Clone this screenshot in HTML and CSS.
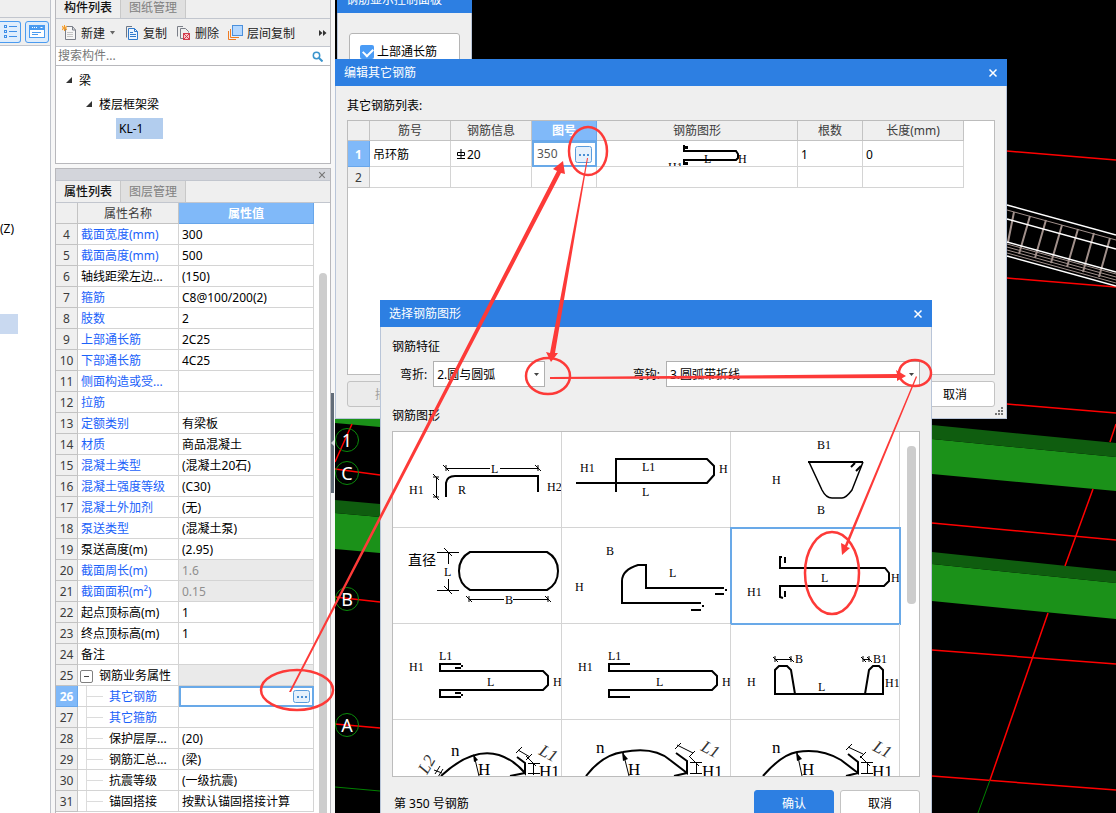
FILE: index.html
```html
<!DOCTYPE html>
<html lang="zh-CN">
<head>
<meta charset="utf-8">
<title>编辑其它钢筋</title>
<link rel="stylesheet" href="styles.css">
</head>
<body>
<svg class="defs" width="0" height="0" aria-hidden="true">
  <defs>
    <symbol id="dots" viewBox="0 0 17 13">
      <rect x="0.5" y="0.5" width="16" height="12" rx="2" fill="#e6f1fc" stroke="#5a9cdc"/>
      <path d="M4 6h2v2H4zM8 6h2v2H8zM12 6h2v2h-2z" fill="#4a8fd4"/>
    </symbol>
    <symbol id="cross" viewBox="0 0 10 10">
      <path d="M1.500 1.500l7 7M8.500 1.500l-7 7" stroke="currentColor" stroke-width="1.500" fill="none"/>
    </symbol>
  </defs>
</svg>

<div class="app">
  <aside class="rail">
    <div class="rail-top"></div>
    <div class="rail-tools">
      <button class="rail-btn rail-btn-first" type="button" aria-label="列表">
        <svg width="15" height="14" viewBox="0 0 15 14" fill="none" stroke="#3f8fe8"><rect x="1.500" y="0.500" width="2" height="2"/><rect x="1.500" y="5.500" width="2" height="2"/><rect x="1.500" y="10.500" width="2" height="2"/><path d="M6 1.500h8M6 6.500h8M6 11.500h8"/></svg>
      </button>
      <button class="rail-btn" type="button" aria-label="窗口">
        <svg width="16" height="14" viewBox="0 0 16 14"><rect x="0.500" y="0.500" width="15" height="12" fill="#fff" stroke="#4a9bf0"/><path d="M1 1h14v4H1z" fill="#4a9bf0"/><path d="M3 2h1v1H3zM5 2h1v1H5zM7 2h1v1H7zM11 2h3l-1 1h-1z" fill="#fff"/><path d="M3 7.500h9M3 9.500h6" stroke="#4a9bf0"/></svg>
      </button>
    </div>
    <div class="rail-body">
      <span class="axis-label">(Z)</span>
      <span class="rail-mark"></span>
    </div>
  </aside>

  <main class="docks">
    <section class="dock dock-components">
      <nav class="tabs tabs-top">
        <button class="tab active" type="button">构件列表</button>
        <button class="tab" type="button">图纸管理</button>
      </nav>
      <div class="toolbar">
        <button class="tool" type="button">
          <svg width="15" height="16" viewBox="0 0 15 16"><path d="M3.500 3.500V14.500H13.500V5L10.500 1.500H5" fill="#f6f6f6" stroke="#7b7f88"/><path d="M10.500 1.500V5h3" fill="none" stroke="#7b7f88"/><path d="M5 7.500h6M5 9.500h6M5 11.500h6" stroke="#c4c4c4"/><path d="M0 1l5 4M0 5l5-4M2.500 0v6M0 3h5" stroke="#f59a23"/></svg>
          <span>新建</span>
          <svg width="7" height="4" viewBox="0 0 7 4"><path d="M1 0h5l-2.500 3.500z" fill="#666"/></svg>
        </button>
        <button class="tool" type="button">
          <svg width="14" height="16" viewBox="0 0 14 16"><path d="M1.500 12.500V1.500H7" fill="none" stroke="#6c7788"/><path d="M3.500 3.500h6l3 3v8h-9z" fill="#eaf4ff" stroke="#2f79cc"/><path d="M5 7.500h3M5 9.500h6M5 11.500h6" stroke="#2f79cc"/><path d="M9.500 3.500v3h3" fill="none" stroke="#2f79cc"/></svg>
          <span>复制</span>
        </button>
        <button class="tool" type="button">
          <svg width="15" height="16" viewBox="0 0 15 16"><path d="M1.500 11.500V1.500H7" fill="none" stroke="#7b7f88"/><path d="M7 13.500H4.500V3.500h5l3 3v1" fill="none" stroke="#7b7f88"/><rect x="7.500" y="8.500" width="6" height="6" fill="#f8c6ca" stroke="#d13b4c"/><path d="M8 9l5 5M13 9l-5 5" stroke="#d13b4c"/></svg>
          <span>删除</span>
        </button>
        <button class="tool" type="button">
          <svg width="15" height="16" viewBox="0 0 15 16"><path d="M0.500 6v8.500H8" fill="none" stroke="#ef7b22"/><path d="M2.500 4v8.500H11" fill="none" stroke="#ef7b22"/><rect x="4.500" y="0.500" width="10" height="10" fill="#b5d8ff" stroke="#4b90dc"/></svg>
          <span>层间复制</span>
        </button>
        <button class="tool more" type="button" aria-label="更多">
          <svg width="8" height="6" viewBox="0 0 8 6"><path d="M0 0l3.500 3L0 6zM4 0l3.500 3L4 6z" fill="#333"/></svg>
        </button>
      </div>
      <label class="search">
        <input type="text" placeholder="搜索构件..." aria-label="搜索构件">
        <svg width="11" height="11" viewBox="0 0 11 11" fill="none" stroke="#3a94cc"><circle cx="4.500" cy="4.500" r="3.200" stroke-width="1.500"/><path d="M7 7l3.500 3.500" stroke-width="2"/></svg>
      </label>
      <ul class="tree">
        <li class="level-1"><svg width="6" height="6" viewBox="0 0 6 6"><path d="M6 0v6H0z" fill="#333"/></svg><span>梁</span></li>
        <li class="level-2"><svg width="6" height="6" viewBox="0 0 6 6"><path d="M6 0v6H0z" fill="#333"/></svg><span>楼层框架梁</span></li>
        <li class="level-3"><span class="picked">KL-1</span></li>
      </ul>
    </section>

    <section class="dock dock-props">
      <div class="dock-title"><button type="button" aria-label="关闭"><svg width="8" height="8"><use href="#cross"/></svg></button></div>
      <nav class="tabs">
        <button class="tab active" type="button">属性列表</button>
        <button class="tab" type="button">图层管理</button>
      </nav>
      <div class="props-body">
        <table class="props">
          <colgroup><col class="c-no"><col class="c-name"><col class="c-val"></colgroup>
          <thead><tr><th></th><th>属性名称</th><th class="on">属性值</th></tr></thead>
          <tbody>
            <tr><th>4</th><td class="link">截面宽度(mm)</td><td>300</td></tr>
            <tr><th>5</th><td class="link">截面高度(mm)</td><td>500</td></tr>
            <tr><th>6</th><td>轴线距梁左边...</td><td>(150)</td></tr>
            <tr><th>7</th><td class="link">箍筋</td><td>C8@100/200(2)</td></tr>
            <tr><th>8</th><td class="link">肢数</td><td>2</td></tr>
            <tr><th>9</th><td class="link">上部通长筋</td><td>2C25</td></tr>
            <tr><th>10</th><td class="link">下部通长筋</td><td>4C25</td></tr>
            <tr><th>11</th><td class="link">侧面构造或受...</td><td></td></tr>
            <tr><th>12</th><td class="link">拉筋</td><td></td></tr>
            <tr><th>13</th><td class="link">定额类别</td><td>有梁板</td></tr>
            <tr><th>14</th><td class="link">材质</td><td>商品混凝土</td></tr>
            <tr><th>15</th><td class="link">混凝土类型</td><td>(混凝土20石)</td></tr>
            <tr><th>16</th><td class="link">混凝土强度等级</td><td>(C30)</td></tr>
            <tr><th>17</th><td class="link">混凝土外加剂</td><td>(无)</td></tr>
            <tr><th>18</th><td class="link">泵送类型</td><td>(混凝土泵)</td></tr>
            <tr><th>19</th><td>泵送高度(m)</td><td>(2.95)</td></tr>
            <tr><th>20</th><td class="link">截面周长(m)</td><td class="off">1.6</td></tr>
            <tr><th>21</th><td class="link">截面面积(m²)</td><td class="off">0.15</td></tr>
            <tr><th>22</th><td>起点顶标高(m)</td><td>1</td></tr>
            <tr><th>23</th><td>终点顶标高(m)</td><td>1</td></tr>
            <tr><th>24</th><td>备注</td><td></td></tr>
            <tr><th>25</th><td class="group"><button class="fold" type="button" aria-label="折叠"></button>钢筋业务属性</td><td class="off"></td></tr>
            <tr><th class="on">26</th><td class="child link"><i></i>其它钢筋</td><td class="editing"><button class="dots" type="button" aria-label="编辑其它钢筋"><svg width="17" height="13"><use href="#dots"/></svg></button></td></tr>
            <tr><th>27</th><td class="child link"><i></i>其它箍筋</td><td></td></tr>
            <tr><th>28</th><td class="child"><i></i>保护层厚...</td><td>(20)</td></tr>
            <tr><th>29</th><td class="child"><i></i>钢筋汇总...</td><td>(梁)</td></tr>
            <tr><th>30</th><td class="child"><i></i>抗震等级</td><td>(一级抗震)</td></tr>
            <tr><th>31</th><td class="child"><i></i>锚固搭接</td><td>按默认锚固搭接计算</td></tr>
          </tbody>
        </table>
        <div class="props-scroll"><span></span></div>
      </div>
    </section>
  </main>

  <div class="splitter"><button type="button" aria-label="收起"><svg width="3" height="6" viewBox="0 0 3 6"><path d="M3 0v6L0 3z" fill="#d5d9de"/></svg></button></div>

  <section class="canvas">
    <svg class="scene" aria-hidden="true">
      <g transform="translate(-335 0)" fill="none">
        <path d="M335 419L380 419V427L335 423zM932 439L1116 457V491L932 474zM335 513L380 517V553L335 549zM932 564L1116 583V619L932 601z" fill="#1b9119"/>
        <path d="M932 425L1116 443V457L932 439zM335 500L380 504V517L335 513zM932 552L1116 571V583L932 564z" fill="#0f5d0f"/>
        <g stroke="#f00" stroke-width="1.500">
          <path d="M1007 151L1116 160M1007 278L1116 287M1007 404L1116 413M932 523L1116 540M932 650L1116 664M932 776L1116 790"/>
          <path d="M1116 424L1110 442M1093 489L1065 566M1048 613L990 780M352 424L335 462M335 469L380 475M335 597L380 602M335 724L380 728"/>
        </g>
        <path d="M335 787L380 791M990 780L978 813" stroke="#008000"/>
        <g stroke="#0a8a0a"><circle cx="347" cy="440" r="11.500"/><circle cx="347" cy="473" r="11.500"/><circle cx="347" cy="599" r="11.500"/><circle cx="347" cy="725" r="11.500"/></g>
        <g class="axis-name"><text x="347" y="447">1</text><text x="347" y="480">C</text><text x="347" y="606">B</text><text x="347" y="732">A</text></g>
        <path d="M1007 210L1116 240M1007 244L1116 274M1007 247L1116 277M1007 250L1116 280M1007 253L1116 283" stroke="#a08f8a"/>
        <path d="M1014 212L1008 242M1030 216L1019 254M1046 220L1035 258M1062 225L1051 263M1078 229L1067 267M1094 233L1083 272M1110 238L1099 277" stroke="#a08f8a" stroke-width="2"/>
        <path d="M1007 205L1116 235M1007 219L1116 249M1007 242L1116 272M1007 256L1116 286" stroke="#fff" stroke-width="1.500"/>
      </g>
    </svg>

    <section class="window win-display">
      <header><h2>钢筋显示控制面板</h2></header>
      <div class="win-body">
        <fieldset class="checks"><label><input type="checkbox" checked><span>上部通长筋</span></label></fieldset>
      </div>
    </section>

    <section class="window win-edit">
      <header><h2>编辑其它钢筋</h2><button type="button" aria-label="关闭"><svg width="10" height="10"><use href="#cross"/></svg></button></header>
      <div class="win-body">
        <p class="caption">其它钢筋列表:</p>
        <div class="bars-box">
          <table class="bars">
            <colgroup><col class="b-no"><col class="b-name"><col class="b-info"><col class="b-fig"><col class="b-shape"><col class="b-count"><col class="b-len"></colgroup>
            <thead><tr><th></th><th>筋号</th><th>钢筋信息</th><th class="on">图号</th><th>钢筋图形</th><th>根数</th><th>长度(mm)</th></tr></thead>
            <tbody>
              <tr class="first"><th class="on">1</th><td>吊环筋</td><td><svg class="grade" width="10" height="10" viewBox="0 0 10 10" fill="none" stroke="#000"><path d="M5 0v9M1 9.500h8M1.500 3.500h7v3h-7z"/></svg>20</td><td class="editing"><div class="edit-row"><span>350</span><button class="dots" type="button" aria-label="选择图号"><svg width="17" height="17" viewBox="0 0 17 17"><rect x="0.500" y="0.500" width="16" height="16" rx="2" fill="#e6f1fc" stroke="#5a9cdc"/><path d="M4 8h2v2H4zM8 8h2v2H8zM12 8h2v2h-2z" fill="#4a8fd4"/></svg></button></div></td>
                <td class="shape-cell"><svg width="200" height="25" viewBox="0 0 200 25"><path d="M87 4V10H139L141 13V17L139 19H87V24" fill="none" stroke="#000" stroke-width="2"/><path d="M88 5h3v3h-3zM88 21h3v3h-3z"/><text x="107" y="22">L</text><text x="141" y="22">H</text><text x="71" y="30">H1</text></svg></td><td>1</td><td>0</td></tr>
              <tr><th>2</th><td></td><td></td><td></td><td></td><td></td><td></td></tr>
            </tbody>
          </table>
        </div>
        <footer><button class="btn" type="button" disabled>插入</button><button class="btn" type="button">取消</button></footer>
        <svg class="grip" width="8" height="8" viewBox="0 0 8 8" fill="#777"><path d="M6 0h2v2H6zM3 3h2v2H3zM6 3h2v2H6zM0 6h2v2H0zM3 6h2v2H3zM6 6h2v2H6z"/></svg>
      </div>
    </section>

    <section class="window win-pick">
      <header><h2>选择钢筋图形</h2><button type="button" aria-label="关闭"><svg width="10" height="10"><use href="#cross"/></svg></button></header>
      <div class="win-body">
        <p class="caption">钢筋特征</p>
        <div class="filters">
          <div class="field"><label for="bend">弯折:</label><span class="select bend"><select id="bend"><option>2.圆与圆弧</option></select><svg width="5" height="3" viewBox="0 0 5 3"><path d="M0 0h5L2.500 3z" fill="#444"/></svg></span></div>
          <div class="field"><label for="hook">弯钩:</label><span class="select hook"><select id="hook"><option>3.圆弧带折线</option></select><svg width="5" height="3" viewBox="0 0 5 3"><path d="M0 0h5L2.500 3z" fill="#444"/></svg></span></div>
        </div>
        <p class="caption">钢筋图形</p>
        <div class="gallery">
          <div class="cells">
            <button type="button" class="cell"><svg viewBox="0 0 168 95"><g class="bar"><path d="M53 65V51Q54 44 62 44H145V60"/></g><g class="dim"><path d="M53 36.500H97M107 36.500H145M43.500 45V65M50 33l6 6M53 33v6M142 33l6 6M145 33v6M40 42l6 6M40 45h6M40 62l6 6M40 65h6"/></g><text x="98" y="41">L</text><text x="16" y="62">H1</text><text x="65" y="62">R</text><text x="154" y="59">H2</text></svg></button>
            <button type="button" class="cell"><svg viewBox="0 0 168 95"><g class="bar"><path d="M14 51H145L152 43V34L145 27H54V60"/></g><text x="18" y="40">H1</text><text x="80" y="39">L1</text><text x="80" y="64">L</text><text x="157" y="41">H</text></svg></button>
            <button type="button" class="cell"><svg viewBox="0 0 168 95"><g class="bar"><path d="M77 30H132M120 35L124 31M125 39L130 34"/></g><g class="thin"><path d="M78 30L91 58Q95 66 101 66H111Q115 66 121 58L132 30"/></g><text x="86" y="17">B1</text><text x="41" y="52">H</text><text x="86" y="82">B</text></svg></button>

            <button type="button" class="cell"><svg viewBox="0 0 168 95"><g class="bar"><path d="M77 24H154Q165 30 165 43T154 62H77Q66 56 66 43T77 24z"/></g><g class="dim"><path d="M44 24.500H66M44 62.500H66M55.500 24V36M55.500 51V62M76 71.500H111M120 71.500H155M51 20l8 8M51 58l8 8M73 68l6 6M76 68v6M152 68l6 6M155 68v6"/></g><text x="51" y="48">L</text><text x="112" y="76">B</text><text class="cjk" x="15" y="37">直径</text></svg></button>
            <button type="button" class="cell"><svg viewBox="0 0 168 95"><g class="bar"><path d="M162 60H84V37H76Q60 42 60 53V75H139M153 66H162M129 82H139M163 62h2M140 78h2"/></g><text x="44" y="27">B</text><text x="13" y="63">H</text><text x="107" y="49">L</text></svg></button>
            <button type="button" class="cell chosen"><svg viewBox="0 0 168 95"><g class="bar"><path d="M51 29H49V40H154L158 45V53L153 58H49V69L52 70M54 29V35M54 63V69"/></g><text x="16" y="68">H1</text><text x="90" y="54">L</text><text x="160" y="54">H</text></svg></button>

            <button type="button" class="cell"><svg viewBox="0 0 168 95"><g class="bar"><path d="M68 40H47V47H150L155 52V61L150 66H47V73H68M62 44H68M62 69H68M68 42h2M68 71h2"/></g><text x="46" y="36">L1</text><text x="16" y="47">H1</text><text x="94" y="62">L</text><text x="160" y="62">H</text></svg></button>
            <button type="button" class="cell"><svg viewBox="0 0 168 95"><g class="bar"><path d="M68 40H47V47H150L155 52V61L150 66H47V73H68"/></g><text x="46" y="36">L1</text><text x="16" y="47">H1</text><text x="94" y="62">L</text><text x="160" y="62">H</text></svg></button>
            <button type="button" class="cell"><svg viewBox="0 0 168 95"><g class="bar"><path d="M44 70V46L48 42H56L60 46L64 70M152 70V46L148 42H142L138 46L134 70M43 70H153"/></g><g class="dim"><path d="M44 35.500H60M132 35.500H138M42 33l5 5M58 33l5 5M44 32v6M60 32v6M130 33l5 5M136 33l5 5M132 32v6M138 32v6"/></g><text x="16" y="62">H</text><text x="64" y="39">B</text><text x="142" y="39">B1</text><text x="87" y="67">L</text><text x="154" y="63">H1</text></svg></button>

            <button type="button" class="cell"><svg viewBox="0 0 168 95"><g class="bar"><path d="M48 56Q79 27 106 35Q121 40 132 53V43L124 37M117 56L132 53"/></g><g class="dim"><path d="M81 35L86 56M125 30L137 37M123 33l6-6M133 40l6-6M140.500 43V55M135 43.500H147M135 53.500H147M137 40l6 6M133 36l10 10M42 54l5-8M45 57l5-8M41 50l8 3"/></g><path d="M80 34l5 6-4 2z"/><g class="big"><text x="58" y="36">n</text><text x="85" y="55">H</text><text x="146" y="57">H1</text><text class="slant" transform="translate(145 34) rotate(28)">L1</text><text class="slant" transform="translate(34 55) rotate(-60)">L2</text></g></svg></button>
            <button type="button" class="cell"><svg viewBox="0 0 168 95"><g class="bar"><path d="M24 56Q40 35 61 32Q92 26 108 40L125 53V41L114 33M112 56L125 53"/></g><g class="dim"><path d="M61 32L67 56M115 25L131 33M113 29l6-6M127 37l6-6M134.500 42V54M128 42.500H140M128 53.500H140M127 36l10 10"/></g><path d="M60 32l6 7-5 2z"/><g class="big"><text x="34" y="33">n</text><text x="66" y="55">H</text><text x="140" y="57">H1</text><text class="slant" transform="translate(138 30) rotate(28)">L1</text></g></svg></button>
            <button type="button" class="cell"><svg viewBox="0 0 168 95"><g class="bar"><path d="M32 56Q50 35 66 32Q90 28 110 40L127 53V42L117 34M115 56L127 53"/></g><g class="dim"><path d="M66 32L71 56M117 27L132 34M115 30l6-6M129 38l6-6M136.500 42V54M130 42.500H142M130 53.500H142M129 36l10 10"/></g><path d="M65 32l6 7-5 2z"/><g class="big"><text x="41" y="33">n</text><text x="71" y="55">H</text><text x="141" y="57">H1</text><text class="slant" transform="translate(141 30) rotate(28)">L1</text></g></svg></button>
          </div>
          <div class="gallery-scroll"><span></span></div>
        </div>
        <footer><span>第 350 号钢筋</span><button class="btn primary" type="button">确认</button><button class="btn" type="button">取消</button></footer>
      </div>
    </section>
  </section>

  <svg class="notes" aria-hidden="true">
    <g fill="none" stroke="#fd3a38" stroke-width="2.500">
      <ellipse cx="297" cy="690" rx="36" ry="20"/>
      <ellipse cx="588" cy="151" rx="19" ry="24"/>
      <ellipse cx="548" cy="376" rx="22" ry="18"/>
      <ellipse cx="915" cy="373" rx="16" ry="13"/>
      <ellipse cx="832" cy="573" rx="27" ry="41"/>
    </g>
    <g fill="#fd3a38">
      <path d="M289 692L557 171L553 169L563 161L565 174L561 173L291 692z"/>
      <path d="M588 158L587 158L550 353L546 352L551 362L558 353L555 353z"/>
      <path d="M550 377L897 374L896 370L906 376L897 381L897 378L550 379z"/>
      <path d="M916 376L845 545L841 543L842 555L850 548L847 547L917 377z"/>
    </g>
  </svg>
</div>
</body>
</html>
```

FILE: styles.css
```css
* { box-sizing: border-box; }

body {
  margin: 0;
  font: 12px/18px "Noto Sans", "Noto Sans CJK SC", sans-serif;
  color: #000;
  background: #f7f7f7;
}

button, input, select { font: inherit; color: inherit; margin: 0; padding: 0; }
button { border: 0; background: none; }
h2, p, ul { margin: 0; padding: 0; font-size: 12px; font-weight: normal; }
svg { display: block; flex: none; }
.defs { position: absolute; }

.app {
  position: relative;
  display: flex;
  height: 100vh;
  overflow: hidden;
}

/* left rail */
.rail {
  display: flex;
  flex-direction: column;
  flex: none;
  width: 51px;
  border-right: 1px solid #bfc3cb;
  background: #fff;
}
.rail-top { height: 18px; background: #efefef; border-bottom: 1px solid #c2c6ce; }
.rail-tools {
  display: flex;
  align-items: center;
  gap: 4px;
  height: 28px;
  background: #efefef;
  border-bottom: 1px solid #c2c6ce;
}
.rail-btn {
  display: flex;
  align-items: center;
  justify-content: center;
  width: 24px;
  height: 22px;
  border: 1px solid #4a9bf0;
  border-radius: 3px;
  background: #dfedfc;
}
.rail-btn-first { width: 21px; border-left: 0; border-radius: 0 3px 3px 0; }
.rail-body { display: flex; flex-direction: column; gap: 76px; padding-top: 174px; }
.rail-mark { width: 18px; height: 20px; background: #c9d9f0; }

/* docked panels */
.docks {
  display: flex;
  flex-direction: column;
  gap: 4px;
  flex: none;
  width: 276px;
  margin-left: 4px;
}
.dock { border: 1px solid #b8b8bc; background: #fff; }
.dock-components { border-top: 0; height: 164px; }
.dock-props { flex: 1; display: flex; flex-direction: column; min-height: 0; border-bottom: 0; }
.dock-title {
  display: flex;
  align-items: center;
  justify-content: flex-end;
  height: 12px;
  padding-right: 4px;
  color: #777;
  background: #d3d5db;
  border-bottom: 1px solid #c2c6ce;
}
.tabs { display: flex; flex: none; height: 22px; background: #efefef; border-bottom: 1px solid #c2c6ce; }
.tabs-top { height: 19px; }
.tab {
  width: 65px;
  border-right: 1px solid #c8c8c8;
  color: #808080;
  background: #e0e0e0;
}
.tab.active { color: #111; background: #efefef; font-weight: 500; }
.tabs-top .tab { line-height: 16px; padding-bottom: 2px; }

.toolbar {
  display: flex;
  align-items: center;
  gap: 9px;
  height: 28px;
  padding: 0 3px 0 6px;
  color: #222;
  background: #efefef;
  border-bottom: 1px solid #c2c6ce;
}
.tool { display: flex; align-items: center; gap: 4px; white-space: nowrap; }
.tool span { padding-top: 2px; }
.tool.more { margin-left: auto; }
.search {
  display: flex;
  align-items: center;
  height: 19px;
  padding: 0 7px 0 2px;
  border-bottom: 1px solid #b8b8bc;
}
.search input { flex: 1; min-width: 0; height: 18px; border: 0; outline: 0; background: none; }
.search input::placeholder { color: #777; opacity: 1; }

.tree { list-style: none; padding-top: 2px; }
.tree li { display: flex; align-items: center; gap: 7px; height: 24px; }
.tree span { padding-top: 2px; }
.level-1 { padding-left: 10px; }
.level-2 { padding-left: 30px; }
.level-3 { padding-left: 60px; }
.tree .picked { width: 47px; height: 21px; padding: 2px 3px 0; background: #b2cdee; }

/* grids */
table { border-collapse: separate; border-spacing: 0; table-layout: fixed; }
th, td {
  height: 21px;
  padding: 2px 3px 0;
  border-right: 1px solid #d4d4d4;
  border-bottom: 1px solid #d4d4d4;
  line-height: 18px;
  font-weight: normal;
  text-align: left;
  white-space: nowrap;
  overflow: hidden;
}
th {
  padding: 2px 0 0;
  color: #3c3c3c;
  background: #efefef;
  border-color: #c3c3c3;
  text-align: center;
}
th.on { color: #fff; background: #80b9f9; border-color: #68a6ea; font-weight: bold; }

.props-body { flex: 1; display: flex; min-height: 0; overflow: hidden; background: #fff; }
.props { flex: none; align-self: flex-start; width: 258px; }
.c-no { width: 22px; }
.c-name { width: 101px; }
.c-val { width: 135px; }
.link { color: #1b62fa; }
td.off { color: #8f8f8f; background: #eaeaea; }
td.editing { border: 2px solid #69a9e8; padding: 0 3px; }
.props td.editing { padding: 0 2px 0 0; }
.props .dots { display: block; margin-left: auto; }
.fold {
  display: inline-block;
  width: 13px;
  height: 13px;
  margin-right: 6px;
  border: 1px solid #808080;
  border-radius: 2px;
  vertical-align: -2px;
  background: linear-gradient(#444, #444) center / 5px 1px no-repeat;
}
.child { padding-left: 8px; padding-right: 0; }
.child i {
  display: inline-block;
  width: 23px;
  height: 20px;
  margin-top: -2px;
  border-left: 1px solid #dcdcdc;
  vertical-align: top;
  background: linear-gradient(#dcdcdc, #dcdcdc) left center / 16px 1px no-repeat;
}
.group { padding-left: 2px; }
.props-scroll { flex: 1; padding: 70px 3px 0 5px; }
.props-scroll span { display: block; height: 100%; border-radius: 4px 4px 0 0; background: #cdcdcd; }

.splitter { flex: none; width: 4px; padding-top: 393px; }
.splitter button { display: block; width: 3px; height: 100px; background: #626c78; }

/* model view */
.canvas { position: relative; flex: 1; min-width: 0; overflow: hidden; background: #000; }
.scene { position: absolute; inset: 0; width: 100%; height: 100%; }
.axis-name { fill: #fff; font-size: 18px; text-anchor: middle; }

/* floating windows */
.window { position: absolute; display: flex; flex-direction: column; }
.window header {
  display: flex;
  align-items: center;
  justify-content: space-between;
  flex: none;
  height: 27px;
  padding: 0 9px;
  color: #fff;
  background: #2d7fe2;
}
.window h2 { padding-top: 1px; }
.win-body {
  display: flex;
  flex-direction: column;
  flex: 1;
  padding: 0 11px;
  border: 1px solid #b9c5d8;
  border-top: 0;
  background: #efefef;
}
.win-display { left: 2px; top: -14px; width: 135px; height: 90px; }
.win-edit { left: 0; top: 59px; width: 672px; height: 360px; }
.win-pick { left: 45px; top: 300px; width: 552px; height: 530px; }

.checks { margin: 20px 0 0; padding: 9px 10px; border: 1px solid #b5b5b5; border-radius: 3px; background: #fff; height: 60px; }
.checks label { display: flex; align-items: center; gap: 3px; }
.checks input {
  appearance: none;
  width: 14px;
  height: 14px;
  border-radius: 2px;
  background: #4a9bf5;
  position: relative;
}
.checks input:checked::after {
  content: "";
  position: absolute;
  left: 3px;
  top: 3px;
  width: 8px;
  height: 5px;
  border: solid #fff;
  border-width: 0 0 2px 2px;
  transform: rotate(-45deg);
}

.win-edit .caption { padding: 11px 0 5px; }
.bars-box { flex: 1; border: 1px solid #bcbcbc; background: #fff; }
.bars { width: 616px; }
.bars thead th { height: 20px; padding-top: 1px; }
.bars .first th, .bars .first td { height: 26px; }
.b-no { width: 22px; }
.b-name { width: 81px; }
.b-info { width: 81px; }
.b-fig { width: 65px; }
.b-shape { width: 201px; }
.b-count { width: 65px; }
.b-len { width: 101px; }
.grade { display: inline-block; margin: 0 1px 0 2px; vertical-align: 0; }
.edit-row { display: flex; align-items: center; justify-content: space-between; color: #555; }
.bars td.shape-cell { padding: 0; }
.shape-cell text { font: 12px "Liberation Serif", serif; }
.win-edit footer { display: flex; justify-content: space-between; padding: 6px 0 11px; }
.grip { position: absolute; right: 4px; bottom: 4px; }

.btn {
  width: 80px;
  height: 26px;
  padding-top: 1px;
  border: 1px solid #c3c3c3;
  border-radius: 3px;
  background: #fff;
}
.btn:disabled { color: #a0a0a0; background: #ebebeb; }
.btn.primary { color: #fff; border-color: #2d7fe2; background: #2d7fe2; }

.win-pick .caption { padding-top: 11px; }
.filters { display: flex; justify-content: space-between; padding: 5px 0 9px 8px; }
.field { display: flex; align-items: center; gap: 6px; }
.field label { padding-top: 2px; }
.select { position: relative; display: block; height: 26px; }
.select select {
  appearance: none;
  width: 100%;
  height: 100%;
  padding: 2px 3px 0;
  border: 1px solid #b0b0b0;
  border-radius: 0;
  background: #fff;
}
.select svg { position: absolute; right: 6px; top: 12px; }
.bend { width: 112px; }
.hook { width: 254px; }

.gallery {
  display: flex;
  flex: none;
  height: 346px;
  margin-top: 6px;
  overflow: hidden;
  border: 1px solid #bcbcbc;
  background: #fff;
}
.cells { flex: 1; display: grid; grid-template-columns: repeat(3, 1fr); grid-auto-rows: 96px; }
.cell { overflow: hidden; border-right: 1px solid #d4d4d4; border-bottom: 1px solid #d4d4d4; }
.cell svg { width: 100%; height: 100%; }
.cell.chosen { outline: 2px solid #69a9e8; outline-offset: -1px; }
.cell text { font: 12px "Liberation Serif", serif; }
.cell .cjk { font: 14px "Noto Sans CJK SC", sans-serif; }
.cell .big text { font-size: 17px; }
.cell .big .slant { font-style: italic; fill: #333; }
.bar { fill: none; stroke: #000; stroke-width: 2; }
.thin { fill: none; stroke: #000; stroke-width: 1.5; }
.dim { fill: none; stroke: #000; stroke-width: 1; }
.gallery-scroll { flex: none; width: 19px; padding: 14px 3px 0 7px; }
.gallery-scroll span { display: block; height: 158px; border-radius: 4px; background: #cdcdcd; }
.win-pick footer { display: flex; align-items: center; gap: 6px; padding-top: 13px; }
.win-pick footer span { flex: 1; padding: 2px 0 0 2px; }

/* markup drawn over the windows */
.notes { position: absolute; inset: 0; width: 100%; height: 100%; pointer-events: none; }
```
